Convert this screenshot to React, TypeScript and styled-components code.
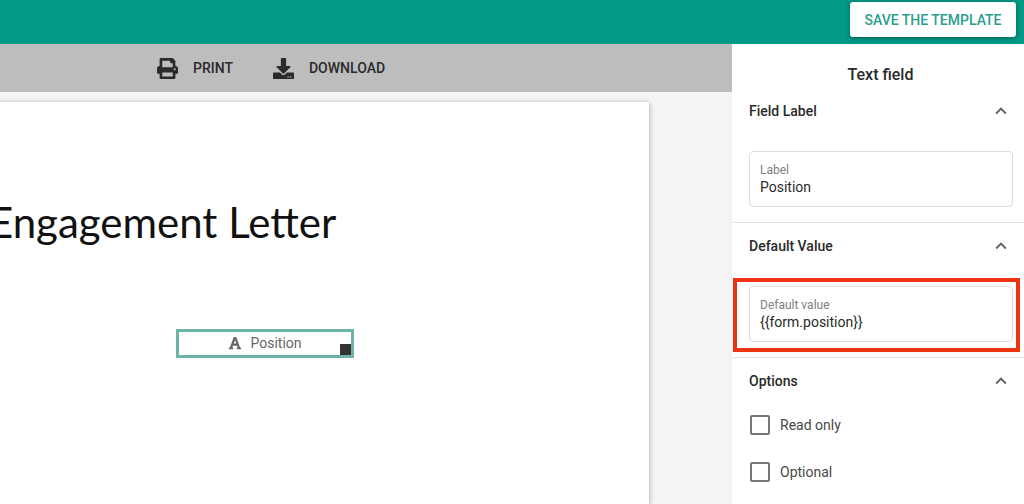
import * as React from 'react';
import styled, { createGlobalStyle } from 'styled-components';
import { FaDownload, FaFont, FaPrint } from 'react-icons/fa';
import { MdKeyboardArrowUp } from 'react-icons/md';

const GlobalStyle = createGlobalStyle`
	html, body {
		margin: 0;
		height: 100%;
		overflow: hidden;
	}
	body {
		font-family: Roboto, "Liberation Sans", sans-serif;
		color: #212121;
	}
`;

const Screen = styled.div`
	display: flex;
	flex-direction: column;
	width: 1024px;
	height: 504px;
	overflow: hidden;
	background: #f4f4f4;
`;

const Header = styled.header`
	display: flex;
	flex: none;
	justify-content: flex-end;
	box-sizing: border-box;
	height: 44px;
	padding: 2px 8px 0 0;
	background: #009a86;
`;

const SaveButton = styled.button`
	box-sizing: border-box;
	width: 166px;
	height: 35px;
	padding: 0;
	border: 0;
	border-radius: 3px;
	background: #fff;
	box-shadow: 0 1px 4px rgba(0, 0, 0, 0.4);
	color: #2a9d8c;
	font-family: Roboto, sans-serif;
	font-size: 14px;
	font-weight: 500;
`;

const Body = styled.div`
	display: flex;
	flex: 1;
	min-height: 0;
`;

const Workspace = styled.main`
	display: flex;
	flex-direction: column;
	flex: none;
	width: 732px;
	min-width: 0;
`;

const Toolbar = styled.div`
	display: flex;
	flex: none;
	align-items: center;
	gap: 40px;
	box-sizing: border-box;
	height: 48px;
	padding-left: 157px;
	background: #bdbdbd;
`;

const ToolbarAction = styled.div`
	display: flex;
	align-items: center;
	gap: 15px;
	color: #2a2a2a;
	font-size: 14px;
	font-weight: 500;
`;

const Page = styled.section`
	position: relative;
	box-sizing: border-box;
	width: 749px;
	height: 500px;
	margin: 10px 0 0 -100px;
	padding: 92px 0 0 89px;
	background: #fff;
	box-shadow: 0 1px 5px rgba(0, 0, 0, 0.35);
`;

const DocumentTitle = styled.h1`
	margin: 0;
	color: #111;
	font-family: Lato, "Open Sans", sans-serif;
	font-size: 42px;
	font-weight: 400;
	line-height: 56px;
	white-space: nowrap;
`;

const DocumentField = styled.div`
	position: absolute;
	left: 276px;
	top: 227px;
	display: flex;
	align-items: center;
	justify-content: center;
	gap: 8px;
	box-sizing: border-box;
	width: 178px;
	height: 29px;
	padding-bottom: 1px;
	border: 3px solid #6db3a9;
	color: #666;
	font-size: 14px;
`;

const ResizeHandle = styled.span`
	position: absolute;
	right: 0;
	bottom: 0;
	width: 11px;
	height: 11px;
	background: #333;
`;

const Sidebar = styled.aside`
	flex: 1;
	background: #fff;
`;

const SidebarTitle = styled.h2`
	margin: 0;
	box-sizing: border-box;
	height: 44px;
	padding: 21px 0 0 5px;
	color: #2a2a2a;
	font-size: 16px;
	font-weight: 500;
	line-height: 20px;
	text-align: center;
`;

const Section = styled.section<{ $last?: boolean }>`
	padding: 0 11px ${props => (props.$last ? 0 : 15)}px 17px;
	border-bottom: ${props => (props.$last ? 'none' : '1px solid #e4e4e4')};
`;

const SectionHeader = styled.div`
	display: flex;
	align-items: center;
	justify-content: space-between;
	height: 46px;
	margin-bottom: 17px;
	color: #2a2a2a;
	font-size: 14px;
	font-weight: 500;
`;

const Chevron = styled(MdKeyboardArrowUp)`
	margin-right: 1px;
	color: #616161;
	font-size: 22px;
`;

const InputBox = styled.div`
	box-sizing: border-box;
	height: 56px;
	padding: 11px 10px 0;
	border: 1px solid #dcdcdc;
	border-radius: 4px;
	background: #fff;
`;

const InputLabel = styled.div`
	color: #808080;
	font-size: 12px;
	line-height: 14px;
`;

const InputValue = styled.div`
	margin-top: 1px;
	color: #2a2a2a;
	font-size: 14px;
	line-height: 18px;
`;

const Highlighted = styled.div`
	position: relative;
`;

const RedOutline = styled.div`
	position: absolute;
	left: -16px;
	right: -7px;
	top: -8px;
	bottom: -10px;
	border: 4px solid #ec3312;
	pointer-events: none;
`;

const OptionList = styled.div`
	display: flex;
	flex-direction: column;
	gap: 27px;
	margin-top: -6px;
	padding-left: 1px;
`;

const Option = styled.label`
	display: flex;
	align-items: center;
	gap: 10px;
	height: 20px;
	color: #484848;
	font-size: 14px;
`;

const CheckBox = styled.span`
	box-sizing: border-box;
	width: 20px;
	height: 20px;
	border: 2px solid #757575;
	border-radius: 2px;
`;

const App = () => (
	<Screen>
		<GlobalStyle />
		<Header>
			<SaveButton>SAVE THE TEMPLATE</SaveButton>
		</Header>
		<Body>
			<Workspace>
				<Toolbar>
					<ToolbarAction>
						<FaPrint size={21} />
						PRINT
					</ToolbarAction>
					<ToolbarAction>
						<FaDownload size={21} />
						DOWNLOAD
					</ToolbarAction>
				</Toolbar>
				<Page>
					<DocumentTitle>Engagement Letter</DocumentTitle>
					<DocumentField>
						<FaFont size={14} />
						Position
						<ResizeHandle />
					</DocumentField>
				</Page>
			</Workspace>
			<Sidebar>
				<SidebarTitle>Text field</SidebarTitle>
				<Section>
					<SectionHeader>
						Field Label
						<Chevron />
					</SectionHeader>
					<InputBox>
						<InputLabel>Label</InputLabel>
						<InputValue>Position</InputValue>
					</InputBox>
				</Section>
				<Section>
					<SectionHeader>
						Default Value
						<Chevron />
					</SectionHeader>
					<Highlighted>
						<InputBox>
							<InputLabel>Default value</InputLabel>
							<InputValue>{'{{form.position}}'}</InputValue>
						</InputBox>
						<RedOutline />
					</Highlighted>
				</Section>
				<Section $last>
					<SectionHeader>
						Options
						<Chevron />
					</SectionHeader>
					<OptionList>
						<Option>
							<CheckBox />
							Read only
						</Option>
						<Option>
							<CheckBox />
							Optional
						</Option>
					</OptionList>
				</Section>
			</Sidebar>
		</Body>
	</Screen>
);

export default App;
